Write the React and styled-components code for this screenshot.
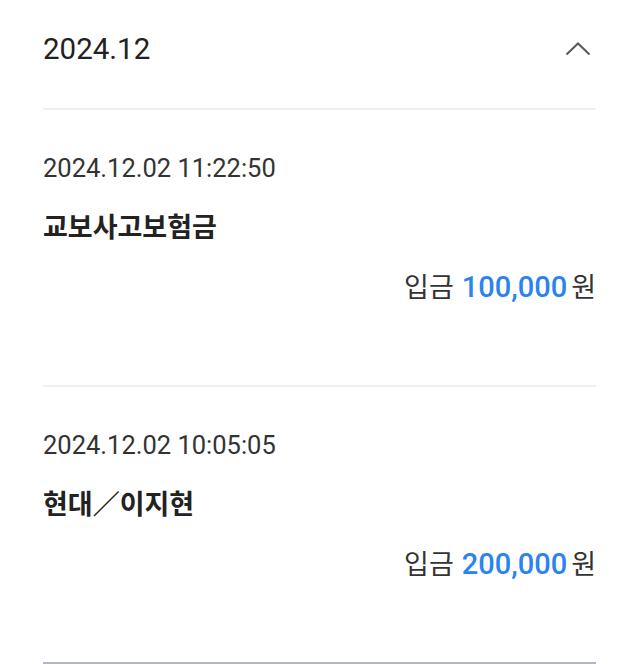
import React from 'react';
import styled, { createGlobalStyle } from 'styled-components';

const GlobalStyle = createGlobalStyle`
  html, body {
    margin: 0;
    padding: 0;
    background: #ffffff;
  }
  body {
    font-family: Roboto, "Noto Sans CJK KR", sans-serif;
    color: #222222;
  }
`;

const Page = styled.div`
  padding: 0 43px;
`;

const MonthHeader = styled.div`
  display: flex;
  align-items: center;
  justify-content: space-between;
  height: 110px;
  padding-bottom: 10px;
  border-bottom: 2px solid #eeeff1;
  box-sizing: border-box;
`;

const MonthTitle = styled.h2`
  margin: 0;
  font-size: 29.5px;
  font-weight: 400;
  color: #222222;
`;

const ToggleButton = styled.button`
  display: flex;
  align-items: center;
  justify-content: center;
  border: 0;
  background: none;
  padding: 0;
  margin-right: 4px;
  width: 28px;
  height: 28px;
`;

const Item = styled.div`
  display: flex;
  flex-direction: column;
  padding-top: 38px;
  height: 277px;
  box-sizing: border-box;
  border-bottom: 2px solid ${(p) => (p.last ? '#b4b8bd' : '#eeeff1')};
`;

const DateText = styled.div`
  font-size: 25.5px;
  line-height: 40px;
  color: #333333;
`;

const Title = styled.div`
  margin-top: 19px;
  font-size: 27px;
  font-weight: 700;
  line-height: 42px;
  color: #222222;
`;

const AmountRow = styled.div`
  margin-top: 17px;
  display: flex;
  justify-content: flex-end;
  align-items: baseline;
  font-size: 27px;
  line-height: 42px;
  color: #333333;
`;

const Amount = styled.span`
  margin: 0 4px 0 8px;
  font-size: 29px;
  color: #2c82f0;
  font-weight: 500;
`;

const ChevronUp = () => (
  <svg width="26" height="14" viewBox="0 0 26 14" fill="none">
    <path d="M1.5 12.5 L13 1.5 L24.5 12.5" stroke="#555a60" strokeWidth="2" />
  </svg>
);

const transactions = [
  { date: '2024.12.02 11:22:50', title: '교보사고보험금', amount: '100,000' },
  { date: '2024.12.02 10:05:05', title: '현대／이지현', amount: '200,000' },
];

const App = () => (
  <>
    <GlobalStyle />
    <Page>
      <MonthHeader>
        <MonthTitle>2024.12</MonthTitle>
        <ToggleButton aria-label="접기">
          <ChevronUp />
        </ToggleButton>
      </MonthHeader>
      {transactions.map((t, i) => (
        <Item key={t.date} last={i === transactions.length - 1}>
          <DateText>{t.date}</DateText>
          <Title>{t.title}</Title>
          <AmountRow>
            <span>입금</span>
            <Amount>{t.amount}</Amount>
            <span>원</span>
          </AmountRow>
        </Item>
      ))}
    </Page>
  </>
);

export default App;
